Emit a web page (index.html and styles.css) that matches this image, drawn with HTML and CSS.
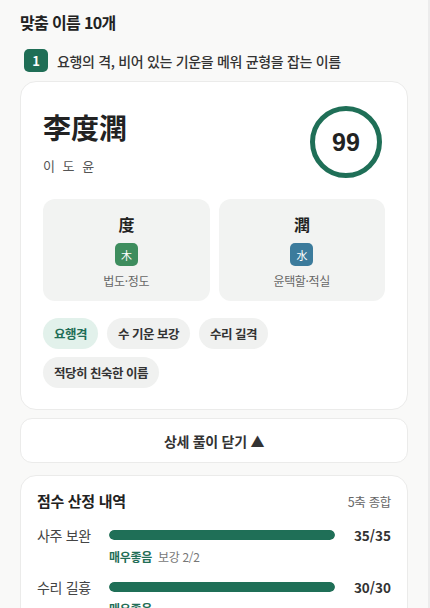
FILE: index.html
```html
<!DOCTYPE html>
<html lang="ko">
<head>
  <meta charset="UTF-8">
  <title>맞춤 이름</title>
  <link rel="stylesheet" href="styles.css">
</head>
<body>
  <div class="page">
    <h2 class="title">맞춤 이름 10개</h2>

    <div class="rank-row">
      <span class="rank">1</span>
      <span class="rank-text">요행의 격, 비어 있는 기운을 메워 균형을 잡는 이름</span>
    </div>

    <div class="card name-card">
      <div class="name-head">
        <div>
          <div class="hanja-name">李度潤</div>
          <div class="hangul-name">이 도 윤</div>
        </div>
        <div class="score-ring">99</div>
      </div>

      <div class="chars">
        <div class="char-box">
          <div class="char">度</div>
          <span class="elem wood">木</span>
          <div class="meaning">법도·정도</div>
        </div>
        <div class="char-box">
          <div class="char">潤</div>
          <span class="elem water">水</span>
          <div class="meaning">윤택할·적실</div>
        </div>
      </div>

      <div class="tags">
        <span class="tag active">요행격</span>
        <span class="tag">수 기운 보강</span>
        <span class="tag">수리 길격</span>
        <span class="tag">적당히 친숙한 이름</span>
      </div>
    </div>

    <button class="toggle">상세 풀이 닫기 ▲</button>

    <div class="card score-card">
      <div class="score-head">
        <h3>점수 산정 내역</h3>
        <span class="sub">5축 종합</span>
      </div>

      <div class="score-row">
        <span class="label">사주 보완</span>
        <div class="bar"><div class="fill" style="width:100%"></div></div>
        <span class="value">35/35</span>
        <div class="note"><b>매우좋음</b> 보강 2/2</div>
      </div>

      <div class="score-row">
        <span class="label">수리 길흉</span>
        <div class="bar"><div class="fill" style="width:100%"></div></div>
        <span class="value">30/30</span>
        <div class="note"><b>매우좋음</b></div>
      </div>
    </div>
  </div>
</body>
</html>
```

FILE: styles.css
```css
html, body {
  margin: 0;
  height: 100%;
}
body {
  font-family: "Noto Sans CJK KR", "Noto Sans", sans-serif;
  background: #f9f9f8;
  color: #222;
  letter-spacing: -0.02em;
  border-right: 2px solid #ececec;
  box-sizing: border-box;
  overflow: hidden;
}
.page {
  padding: 11px 20px 0 20px;
}
.title {
  margin: 0;
  font-size: 16px;
  line-height: 22px;
  font-weight: 700;
  letter-spacing: -0.04em;
}
.rank-row {
  display: flex;
  align-items: center;
  gap: 9px;
  margin: 16px 0 9px 4px;
}
.rank {
  width: 24px;
  height: 23px;
  border-radius: 5px;
  background: #1f6e56;
  color: white;
  font-size: 13px;
  font-weight: 700;
  display: flex;
  align-items: center;
  justify-content: center;
}
.rank-text {
  font-size: 14px;
  font-weight: 500;
  color: #333;
}
.card {
  background: white;
  border: 1px solid #ebebea;
  border-radius: 16px;
}
.name-card {
  padding: 24px 22px 21px 22px;
}
.name-head {
  display: flex;
  justify-content: space-between;
  align-items: center;
  padding-right: 3px;
}
.hanja-name {
  font-size: 28px;
  line-height: 36px;
  font-weight: 700;
  letter-spacing: 0;
}
.hangul-name {
  margin-top: 12px;
  font-size: 13px;
  line-height: 18px;
  color: #555;
  letter-spacing: 2px;
}
.score-ring {
  width: 72px;
  height: 72px;
  box-sizing: border-box;
  border: 5px solid #1f6f57;
  border-radius: 50%;
  display: flex;
  align-items: center;
  justify-content: center;
  font-family: "Liberation Sans", "Noto Sans", sans-serif;
  font-size: 25px;
  font-weight: 700;
  letter-spacing: 0;
}
.chars {
  display: grid;
  grid-template-columns: 1fr 1fr;
  gap: 9px;
  margin-top: 21px;
}
.char-box {
  background: #f2f3f2;
  border-radius: 12px;
  padding: 14px 0 11px 0;
  display: flex;
  flex-direction: column;
  align-items: center;
}
.char {
  font-size: 16px;
  line-height: 22px;
  font-weight: 700;
}
.elem {
  margin-top: 8px;
  width: 23px;
  height: 23px;
  border-radius: 5px;
  color: white;
  font-size: 11px;
  display: flex;
  align-items: center;
  justify-content: center;
}
.wood {
  background: #3e8d5e;
}
.water {
  background: #3c7b9c;
}
.meaning {
  margin-top: 6px;
  font-size: 12px;
  line-height: 18px;
  color: #666;
}
.tags {
  display: flex;
  flex-wrap: wrap;
  gap: 8px 9px;
  margin-top: 17px;
}
.tag {
  height: 31px;
  line-height: 31px;
  padding: 0 11px;
  border-radius: 16px;
  background: #f0f1f0;
  color: #333;
  font-size: 12.5px;
  font-weight: 600;
  letter-spacing: -0.04em;
}
.tag.active {
  background: #e2f1eb;
  color: #1f6e56;
}
.toggle {
  display: block;
  width: 100%;
  height: 45px;
  margin-top: 8px;
  background: white;
  border: 1px solid #ebebea;
  border-radius: 12px;
  font-family: inherit;
  letter-spacing: -0.02em;
  font-size: 14px;
  font-weight: 600;
  color: #333;
}
.score-card {
  margin-top: 12px;
  padding: 14px 16px 40px 16px;
}
.score-head {
  display: flex;
  justify-content: space-between;
  align-items: center;
}
.score-head h3 {
  margin: 0;
  font-size: 15px;
  line-height: 22px;
  font-weight: 700;
}
.score-head .sub {
  font-size: 12.5px;
  color: #666;
}
.score-row {
  display: grid;
  grid-template-columns: 72px 1fr 56px;
  align-items: center;
  margin-top: 13px;
}
.score-row + .score-row {
  margin-top: 11px;
}
.label {
  font-size: 14px;
  line-height: 20px;
  color: #444;
}
.bar {
  height: 10px;
  border-radius: 5px;
  background: #e6e8e6;
  overflow: hidden;
}
.fill {
  height: 100%;
  background: #1f6f57;
  border-radius: 5px;
}
.value {
  text-align: right;
  font-size: 13.5px;
  font-weight: 700;
  color: #333;
  letter-spacing: 0;
}
.note {
  grid-column: 2 / 4;
  margin-top: 3px;
  font-size: 12px;
  line-height: 18px;
  color: #777;
}
.note b {
  color: #1f6e56;
  font-weight: 700;
  margin-right: 3px;
}
```
